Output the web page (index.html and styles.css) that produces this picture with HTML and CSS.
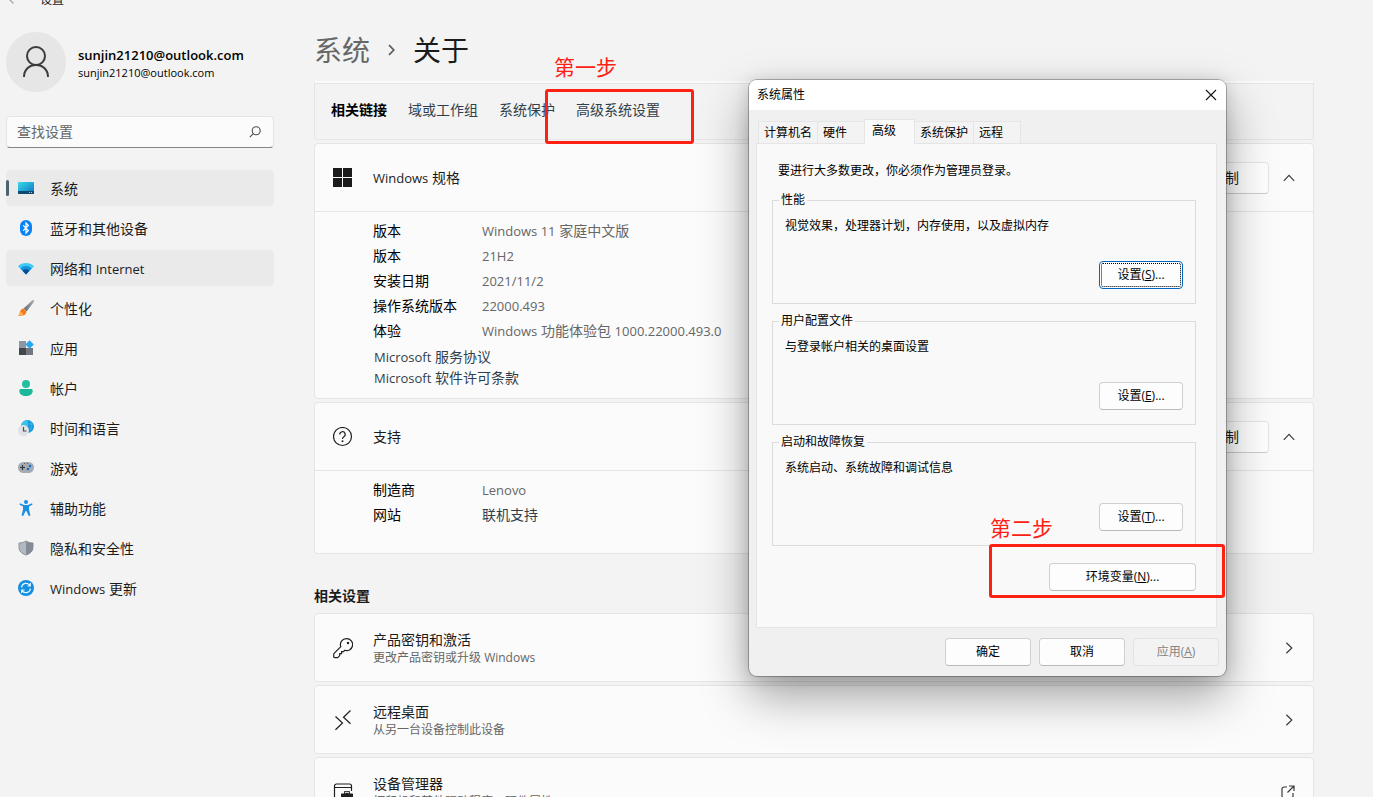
FILE: index.html
```html
<!DOCTYPE html>
<html lang="zh-CN">
<head>
<meta charset="utf-8">
<title>设置</title>
<link rel="stylesheet" href="styles.css">
</head>
<body>
<div class="app">
  <header class="titlebar">
    <svg class="titlebar-back" width="16" height="16" viewBox="0 0 16 16" fill="none" stroke="#a6a6a6" stroke-width="1.3"><path d="M14 8H2M7.500 2.500L2 8l5.500 5.500"/></svg>
    <span class="titlebar-name">设置</span>
  </header>
  <div class="columns">
    <aside class="sidebar">
      <div class="profile">
        <span class="avatar">
          <svg width="28" height="32" viewBox="0 0 28 32" fill="none" stroke="#3b3b3b" stroke-width="2"><circle cx="14" cy="10" r="9"/><path d="M2 31c0-7.500 5.200-12 12-12s12 4.500 12 12"/></svg>
        </span>
        <div class="profile-text">
          <strong class="profile-name">sunjin21210@outlook.com</strong>
          <span class="profile-mail">sunjin21210@outlook.com</span>
        </div>
      </div>
      <label class="search">
        <input class="search-input" type="text" placeholder="查找设置" aria-label="查找设置">
        <svg width="12" height="12" viewBox="0 0 12 12" fill="none" stroke="#4a4a4a" stroke-width="1.100"><circle cx="7.200" cy="4.800" r="4"/><path d="M4.300 7.700L.8 11.200"/></svg>
      </label>
      <nav class="nav">
        <a class="nav-item nav-item--current" href="#"><svg width="16" height="16" viewBox="0 0 16 16"><defs><linearGradient id="g-sys" x1="0" y1="0" x2="1" y2="1"><stop offset="0" stop-color="#35dbe8"/><stop offset="1" stop-color="#0f6fc6"/></linearGradient></defs><rect y="2" width="16" height="12" rx="1" fill="url(#g-sys)"/><path d="M0 11h16v2a1 1 0 0 1-1 1H1a1 1 0 0 1-1-1z" fill="#0d4a6b"/><path d="M11 12h1v1h-1zM13 12h1v1h-1z" fill="#7fd6ee"/></svg><span class="nav-name">系统</span></a>
        <a class="nav-item" href="#"><svg width="16" height="16" viewBox="0 0 16 16"><rect x="2" width="12" height="16" rx="6" fill="#0a84f5"/><path d="M5.200 5.300l5.200 5.200L8 13V3l2.400 2.500-5.200 5.200" fill="none" stroke="#fff" stroke-width="1.200"/></svg><span class="nav-name">蓝牙和其他设备</span></a>
        <a class="nav-item nav-item--hover" href="#"><svg width="16" height="16" viewBox="0 0 16 16"><path d="M0 6.200a11.300 11.300 0 0 1 16 0L8 14.500z" fill="#3ccbf4"/><path d="M2.400 8.400a8 8 0 0 1 11.200 0L8 14.500z" fill="#1490df"/><path d="M4.600 10.700a4.800 4.800 0 0 1 6.800 0L8 14.500z" fill="#0c4a94"/></svg><span class="nav-name">网络和 <span class="latin">Internet</span></span></a>
        <a class="nav-item" href="#"><svg width="16" height="16" viewBox="0 0 16 16"><defs><linearGradient id="g-pen" x1="1" y1="0" x2="0" y2="1"><stop offset="0" stop-color="#a8afb8"/><stop offset="1" stop-color="#646b75"/></linearGradient></defs><path d="M15.800.2c.5.600.1 1.400-.4 2.200l-6.800 9-3.100-2.900L13.800.8c.7-.6 1.500-1.100 2-.6z" fill="url(#g-pen)"/><path d="M5.400 8.600l3 2.800c0 3-2.500 4.600-8.400 4.300 2.300-1.400 1.200-3.200 2.600-5.200.8-1.100 1.800-1.700 2.800-1.900z" fill="#f7791b"/><path d="M2.800 12c1 .2 2.300 1 2.200 2.500-1.200.9-2.800 1.200-5 1.200 2-1.100 1.500-2.300 2.800-3.700z" fill="#ffb05a"/></svg><span class="nav-name">个性化</span></a>
        <a class="nav-item" href="#"><svg width="16" height="16" viewBox="0 0 16 16"><path d="M1 1h7v7H1z" fill="#8f969f"/><path d="M1 8h7v7H1z" fill="#42474d"/><path d="M8 8h7v7H8z" fill="#70777f"/><path d="M11.600.2l4.200 4.300-4.200 4.200-4.300-4.200z" fill="#25a7ee"/></svg><span class="nav-name">应用</span></a>
        <a class="nav-item" href="#"><svg width="16" height="16" viewBox="0 0 16 16"><circle cx="8" cy="4" r="4" fill="#24bfa3"/><path d="M3 9h10c1 0 1.700.7 1.700 1.700C14.700 14 11.800 16 8 16s-6.700-2-6.700-5.300C1.300 9.700 2 9 3 9z" fill="#1cb89b"/></svg><span class="nav-name">帐户</span></a>
        <a class="nav-item" href="#"><svg width="16" height="16" viewBox="0 0 16 16"><circle cx="9.500" cy="6.500" r="6.500" fill="#1798dc"/><path d="M9.500 0A6.500 6.500 0 0 0 3 6.500h6.500z" fill="#38c4e8"/><path d="M3.500 4h12M9.500 0v6M12.500 1c1 3 1 6 0 9" fill="none" stroke="#4cc4ee" stroke-width=".6"/><circle cx="5.500" cy="10.500" r="5.500" fill="#dfe1e4"/><path d="M5.500 7v4h3" fill="none" stroke="#4a4f55" stroke-width="1.200"/></svg><span class="nav-name">时间和语言</span></a>
        <a class="nav-item" href="#"><svg width="16" height="16" viewBox="0 0 16 16"><rect y="2" width="16" height="11" rx="5.500" fill="#a4abb3"/><path d="M2 7.500h5M4.500 5v5" stroke="#33383e" stroke-width="1.200"/><circle cx="12" cy="6" r="1.200" fill="#0b6cc4"/><circle cx="10" cy="9" r="1.200" fill="#0b6cc4"/><path d="M6 3h1v1H6zM9 3h1v1H9z" fill="#5a6068"/></svg><span class="nav-name">游戏</span></a>
        <a class="nav-item" href="#"><svg width="16" height="16" viewBox="0 0 16 16"><circle cx="8" cy="2" r="2" fill="#1a8fe3"/><path d="M2 3.200L6 5h4l4-1.800.6 1.400L11 6.600v3L12.400 15.500l-1.600.5L8.400 11h-.8l-2.400 5-1.600-.5L5 9.600v-3L1.400 4.600z" fill="#1a8fe3"/></svg><span class="nav-name">辅助功能</span></a>
        <a class="nav-item" href="#"><svg width="16" height="16" viewBox="0 0 16 16"><path d="M8 1c2 1.300 4.300 2 7 2v4.500c0 3.500-2.600 6-7 7.500z" fill="#858c95"/><path d="M8 1C6 2.300 3.700 3 1 3v4.500C1 11 3.600 13.500 8 15z" fill="#b3b9c0"/><path d="M8 1c2 1.300 4.300 2 7 2v4.500c0 3.500-2.600 6-7 7.500-4.400-1.500-7-4-7-7.500V3c2.700 0 5-.7 7-2z" fill="none" stroke="#7c838b" stroke-width=".8"/></svg><span class="nav-name">隐私和安全性</span></a>
        <a class="nav-item" href="#"><svg width="16" height="16" viewBox="0 0 16 16"><circle cx="8" cy="8" r="8" fill="#158fe0"/><path d="M3.600 7.500A4.500 4.500 0 0 1 12 5.600M12.400 8.500A4.500 4.500 0 0 1 4 10.400M12.300 3v3H9.400M3.700 13v-3h2.900" fill="none" stroke="#e6f6ff" stroke-width="1.200"/></svg><span class="nav-name"><span class="latin">Windows</span> 更新</span></a>
      </nav>
    </aside>

    <main class="content">
      <h1 class="crumbs">
        <a class="crumb-parent" href="#">系统</a>
        <svg width="9" height="12" viewBox="0 0 9 12" fill="none" stroke="#5c5c5c" stroke-width="1.700"><path d="M2 1.200L6.800 6 2 10.800"/></svg>
        <span>关于</span>
      </h1>
      <div class="stack">
        <section class="links-card">
          <strong class="links-title">相关链接</strong>
          <a class="link" href="#">域或工作组</a>
          <a class="link" href="#">系统保护</a>
          <a class="link" href="#">高级系统设置</a>
        </section>

        <section class="card">
          <header class="card-head">
            <svg class="card-icon" width="20" height="20" viewBox="0 0 20 20" fill="#1b1b1b"><path d="M0 0h9v9H0zM10 0h9v9h-9zM0 10h9v9H0zM10 10h9v9h-9z"/></svg>
            <h2 class="card-title"><span class="latin">Windows</span> 规格</h2>
            <button class="copy" type="button">复制</button>
            <button class="expander" type="button" aria-label="折叠"><svg width="12" height="8" viewBox="0 0 12 8" fill="none" stroke="#3a3a3a" stroke-width="1.200"><path d="M.8 6.800L6 1.400l5.200 5.400"/></svg></button>
          </header>
          <div class="card-body">
            <dl class="specs">
              <dt>版本</dt><dd><span class="latin">Windows 11</span> 家庭中文版</dd>
              <dt>版本</dt><dd><span class="latin">21H2</span></dd>
              <dt>安装日期</dt><dd><span class="latin">2021/11/2</span></dd>
              <dt>操作系统版本</dt><dd><span class="latin">22000.493</span></dd>
              <dt>体验</dt><dd><span class="latin">Windows</span> 功能体验包 <span class="latin">1000.22000.493.0</span></dd>
            </dl>
            <div class="terms">
              <a class="link" href="#"><span class="latin">Microsoft</span> 服务协议</a>
              <a class="link" href="#"><span class="latin">Microsoft</span> 软件许可条款</a>
            </div>
          </div>
        </section>

        <section class="card">
          <header class="card-head">
            <svg class="card-icon" width="20" height="20" viewBox="0 0 20 20" fill="none" stroke="#1f1f1f" stroke-width="1.200"><circle cx="9.500" cy="9.500" r="9"/><path d="M6.800 7.500a2.700 2.700 0 1 1 4 2.300c-.9.500-1.300 1-1.300 2.200"/><circle cx="9.500" cy="14.200" r=".4" fill="#1f1f1f"/></svg>
            <h2 class="card-title">支持</h2>
            <button class="copy" type="button">复制</button>
            <button class="expander" type="button" aria-label="折叠"><svg width="12" height="8" viewBox="0 0 12 8" fill="none" stroke="#3a3a3a" stroke-width="1.200"><path d="M.8 6.800L6 1.400l5.200 5.400"/></svg></button>
          </header>
          <div class="card-body card-body--support">
            <dl class="specs">
              <dt>制造商</dt><dd><span class="latin">Lenovo</span></dd>
              <dt>网站</dt><dd><a class="link" href="#">联机支持</a></dd>
            </dl>
          </div>
        </section>
      </div>

      <h2 class="section-title">相关设置</h2>
      <div class="stack">
        <a class="card card-row" href="#">
          <svg class="card-icon" width="20" height="22" viewBox="0 0 20 22" fill="none" stroke="#1f1f1f" stroke-width="1.200"><path d="M13.500 1.600a6 6 0 1 1-1.700 11.700l-1.300 1.300H8.600v2H6.700v2L5 20.300c-.3.300-.6.400-1 .4H1.800c-.7 0-1.100-.4-1.100-1.100v-2.200c0-.4.200-.8.400-1l6.700-6.700A6 6 0 0 1 13.500 1.600z"/><circle cx="15" cy="6" r="1.200" fill="#1f1f1f" stroke="none"/></svg>
          <span class="row-text"><span class="row-title">产品密钥和激活</span><span class="row-sub">更改产品密钥或升级 <span class="latin-small">Windows</span></span></span>
          <svg class="row-arrow" width="8" height="12" viewBox="0 0 8 12" fill="none" stroke="#3a3a3a" stroke-width="1.200"><path d="M1.400.8L6.800 6l-5.400 5.200"/></svg>
        </a>
        <a class="card card-row" href="#">
          <svg class="card-icon" width="20" height="22" viewBox="0 0 20 22" fill="none" stroke="#1f1f1f" stroke-width="1.200"><path d="M17.500 1.500L10.500 8.200l7 6.500M2.500 7.500l7 6.500-7 6.700"/></svg>
          <span class="row-text"><span class="row-title">远程桌面</span><span class="row-sub">从另一台设备控制此设备</span></span>
          <svg class="row-arrow" width="8" height="12" viewBox="0 0 8 12" fill="none" stroke="#3a3a3a" stroke-width="1.200"><path d="M1.400.8L6.800 6l-5.400 5.200"/></svg>
        </a>
        <a class="card card-row" href="#">
          <svg class="card-icon" width="20" height="22" viewBox="0 0 20 22" fill="none" stroke="#1f1f1f" stroke-width="1.200"><path d="M7 20H3.500A2 2 0 0 1 1.500 18V5a2 2 0 0 1 2-2h13a2 2 0 0 1 2 2v5M1.500 6.500h17"/><path d="M9 12.500h2v-1.400c0-.6.500-1.100 1.100-1.100h3.800c.6 0 1.100.5 1.100 1.100v1.400h2c.6 0 1 .4 1 1V20H8v-6.500c0-.6.400-1 1-1z" fill="#1f1f1f" stroke="none"/><path d="M12.300 12.300v-1h3.400v1" stroke="#fbfbfb" stroke-width="1"/></svg>
          <span class="row-text"><span class="row-title">设备管理器</span><span class="row-sub">打印机和其他驱动程序、硬件属性</span></span>
          <svg class="row-open" width="14" height="14" viewBox="0 0 14 14" fill="none" stroke="#3a3a3a" stroke-width="1.200"><path d="M6 2H3a2 2 0 0 0-2 2v7a2 2 0 0 0 2 2h7a2 2 0 0 0 2-2V8M8 1h5v5M13 1L6.500 7.500"/></svg>
        </a>
      </div>
    </main>
  </div>

  <section class="dialog" role="dialog" aria-labelledby="dialog-name">
    <header class="dialog-bar">
      <span id="dialog-name">系统属性</span>
      <button class="dialog-close" type="button" aria-label="关闭"><svg width="12" height="12" viewBox="0 0 12 12" fill="none" stroke="#1a1a1a" stroke-width="1.200"><path d="M1 1l10 10M11 1L1 11"/></svg></button>
    </header>
    <div class="dialog-main">
      <div class="tabs" role="tablist">
        <button class="tab" type="button" role="tab">计算机名</button>
        <button class="tab tab--roomy" type="button" role="tab">硬件</button>
        <button class="tab tab--roomy tab--active" type="button" role="tab" aria-selected="true">高级</button>
        <button class="tab" type="button" role="tab">系统保护</button>
        <button class="tab tab--roomy" type="button" role="tab">远程</button>
      </div>
      <div class="panel">
        <p class="panel-note">要进行大多数更改，你必须作为管理员登录。</p>
        <div class="groups">
          <fieldset class="group"><legend class="group-name">性能</legend><p class="group-text">视觉效果，处理器计划，内存使用，以及虚拟内存</p><button class="btn btn--focus" type="button">设置(<u>S</u>)...</button></fieldset>
          <fieldset class="group"><legend class="group-name">用户配置文件</legend><p class="group-text">与登录帐户相关的桌面设置</p><button class="btn" type="button">设置(<u>E</u>)...</button></fieldset>
          <fieldset class="group"><legend class="group-name">启动和故障恢复</legend><p class="group-text">系统启动、系统故障和调试信息</p><button class="btn" type="button">设置(<u>T</u>)...</button></fieldset>
        </div>
        <button class="btn btn--wide" type="button">环境变量(<u>N</u>)...</button>
      </div>
      <footer class="dialog-foot">
        <button class="btn" type="button">确定</button>
        <button class="btn" type="button">取消</button>
        <button class="btn" type="button" disabled>应用(<u>A</u>)</button>
      </footer>
    </div>
  </section>

  <div class="mark mark--one"></div>
  <span class="mark-label mark-label--one">第一步</span>
  <div class="mark mark--two"></div>
  <span class="mark-label mark-label--two">第二步</span>
</div>
</body>
</html>
```
FILE: styles.css
```css
* { box-sizing: border-box; }

body {
  margin: 0;
  background: #f3f3f3;
  color: #1b1b1b;
  font-family: "Open Sans", "Noto Sans CJK SC", sans-serif;
  font-size: 14px;
  line-height: 20px;
}

a { color: inherit; text-decoration: none; }
button, input { font: inherit; color: inherit; }
h1, h2, p, dl, dd { margin: 0; font-weight: 400; font-size: inherit; }
svg { flex: none; display: block; }

/* Latin runs sit one step below the Chinese text and never stretch its line */
.latin { font-size: 13px; line-height: 1; }
.latin-small { font-size: 12px; line-height: 1; }

.app { position: relative; height: 100vh; overflow: hidden; }

.titlebar {
  display: flex;
  align-items: flex-end;
  gap: 18px;
  height: 6px;
  padding-left: 6px;
  overflow: hidden;
  font-size: 12px;
  line-height: 12px;
}

.columns { display: flex; gap: 40px; }

/* Sidebar */
.sidebar { flex: 0 0 274px; padding: 26px 0 0 6px; }
.profile { display: flex; align-items: center; gap: 12px; margin-bottom: 24px; }
.avatar {
  display: grid;
  place-items: center;
  width: 60px;
  height: 60px;
  border-radius: 50%;
  background: #e6e6e6;
}
.profile-text { display: flex; flex-direction: column; padding-top: 4px; line-height: 18px; color: #000; }
.profile-name { font-size: 13px; font-weight: 600; }
.profile-mail { font-size: 11px; }

.search {
  display: flex;
  align-items: center;
  height: 32px;
  padding: 0 12px 0 10px;
  margin-bottom: 22px;
  border: 1px solid #e3e3e3;
  border-bottom-color: #858585;
  border-radius: 4px;
  background: #fbfbfb;
}
.search-input { flex: 1; min-width: 0; padding: 0; border: 0; outline: 0; background: transparent; }
.search-input::placeholder { color: #666; opacity: 1; }

.nav { display: flex; flex-direction: column; gap: 4px; }
.nav-item {
  display: flex;
  align-items: center;
  gap: 16px;
  height: 36px;
  padding-left: 12px;
  border-radius: 4px;
}
.nav-name { padding-top: 2px; }
.nav-item--hover, .nav-item--current { background: #eaeaea; }
.nav-item--current { padding-left: 0; }
.nav-item--current::before {
  content: "";
  width: 3px;
  height: 16px;
  margin-right: -7px;
  border-radius: 2px;
  background: #4d626f;
}

/* Main column */
.content { flex: 1; min-width: 0; padding: 23px 59px 0 0; }
.crumbs {
  display: flex;
  align-items: center;
  gap: 17px;
  height: 41px;
  margin-bottom: 11px;
  font-size: 28px;
  line-height: 40px;
}
.crumb-parent { color: #666; }
.stack { display: flex; flex-direction: column; gap: 3px; }

.links-card {
  display: flex;
  align-items: center;
  gap: 21px;
  height: 59px;
  padding: 0 16px 2px;
  border: 1px solid #e5e5e5;
  border-top: 2px solid #fbfbfb;
  border-radius: 0 0 4px 4px;
  box-shadow: inset 0 1px #e5e5e5;
}
.links-title { font-weight: 600; color: #000; }
.link { color: #2f3f4d; }

.card { border: 1px solid #e5e5e5; border-radius: 4px; background: #fbfbfb; }
.card-head {
  display: flex;
  align-items: center;
  height: 68px;
  padding: 0 14px 0 18px;
  border-bottom: 1px solid #e5e5e5;
}
.card-icon { margin-right: 20px; }
.card-title { flex: 1; }
.copy {
  width: 88px;
  height: 32px;
  padding: 0;
  border: 1px solid #e5e5e5;
  border-bottom-color: #ccc;
  border-radius: 4px;
  background: #fefefe;
}
.expander { width: 20px; margin-left: 10px; padding: 6px 4px; border: 0; background: none; }
.card-body { padding: 6px 18px 10px 58px; }
.card-body--support { padding-bottom: 26px; }
.specs { display: grid; grid-template-columns: 109px 1fr; line-height: 25px; }
.specs dt { color: #000; }
.specs dd { color: #666; }
.terms { display: flex; flex-direction: column; align-items: flex-start; margin: 3px 0 0 1px; line-height: 21px; }

.section-title { margin: 32px 0 7px; font-weight: 600; }
.card-row { display: flex; align-items: center; height: 69px; padding: 0 20px 0 18px; }
.row-text { display: flex; flex: 1; flex-direction: column; line-height: 19px; }
.row-sub { font-size: 12px; line-height: 17px; color: #666; }
.row-open { margin-right: -2px; }

/* System properties window */
.dialog {
  position: absolute;
  top: 80px;
  left: 749px;
  width: 477px;
  border-radius: 8px;
  background: #f0f0f0;
  box-shadow: 0 0 0 1px rgba(0, 0, 0, .26), 0 2px 16px rgba(0, 0, 0, .16), 0 20px 48px rgba(0, 0, 0, .36);
  color: #000;
  font-size: 12px;
  line-height: 18px;
}
.dialog-bar {
  display: flex;
  align-items: center;
  justify-content: space-between;
  height: 30px;
  padding: 0 9px 0 8px;
  border-radius: 8px 8px 0 0;
  background: #fff;
}
.dialog-close { padding: 0; border: 0; background: none; }
.dialog-main { padding: 9px 7px 10px; }

.tabs { display: flex; align-items: flex-end; height: 25px; padding-left: 2px; margin-bottom: -1px; }
.tab {
  position: relative;
  height: 23px;
  padding: 0 5px;
  margin-right: -1px;
  border: 1px solid #e5e5e5;
  background: #f3f3f3;
}
.tab--roomy { padding-right: 17px; }
.tab--active { height: 25px; padding: 0 18px 2px 7px; border-bottom-color: #f9f9f9; background: #f9f9f9; }

.panel {
  display: flex;
  flex-direction: column;
  margin-right: 2px;
  padding: 18px 20px 36px 15px;
  border: 1px solid #e5e5e5;
  background: #f9f9f9;
}
.panel-note { margin: 0 0 12px 6px; }
.groups { display: flex; flex-direction: column; gap: 9px; }
.group {
  display: flex;
  flex-direction: column;
  min-width: 0;
  margin: 0;
  padding: 9px 12px 14px;
  border: 1px solid #dcdcdc;
}
.group-name { margin-left: -6px; padding: 0 2px; line-height: 16px; }
.group-text { margin-bottom: 26px; }

.btn {
  width: 84px;
  height: 28px;
  padding: 0;
  border: 1px solid #d0d0d0;
  border-bottom-color: #bababa;
  border-radius: 4px;
  background: #fdfdfd;
}
.group .btn { align-self: flex-end; }
.btn--focus { border-color: #0067c0; outline: 1px dotted #000; outline-offset: -3px; }
.btn--wide { align-self: flex-end; width: 147px; margin-top: 17px; }
.btn:disabled { border-color: #e3e3e3; background: #f3f3f3; color: #838383; }

.dialog-foot { display: flex; justify-content: flex-end; gap: 8px; margin-top: 10px; }
.dialog-foot .btn { width: 86px; }

/* Step annotations drawn over the windows */
.mark { position: absolute; border: 3px solid #fe2012; border-radius: 3px; }
.mark--one { top: 89px; left: 545px; width: 149px; height: 55px; }
.mark--two { top: 544px; left: 989px; width: 236px; height: 54px; }
.mark-label { position: absolute; color: #fe2012; font-size: 21px; line-height: 30px; }
.mark-label--one { top: 52px; left: 554px; }
.mark-label--two { top: 513px; left: 990px; }
```
